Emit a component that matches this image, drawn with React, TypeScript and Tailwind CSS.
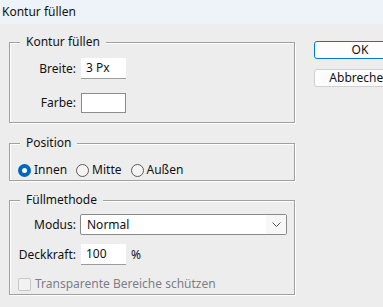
import React from "react";

function Group({ title, className, children }: { title: string; className: string; children: React.ReactNode }) {
  return (
    <div
      className={`relative border border-[#a0a0a0] shadow-[1px_1px_0_#ffffff,inset_1px_1px_0_#ffffff] ${className}`}
    >
      <span className="absolute left-[10px] top-[-9px] bg-[#ededed] px-[6px] leading-[16px]">{title}</span>
      {children}
    </div>
  );
}

function Radio({ label, checked }: { label: string; checked?: boolean }) {
  return (
    <div className="flex items-center gap-[3px]">
      {checked ? (
        <span className="flex h-[13px] w-[13px] items-center justify-center rounded-full bg-[#0067c0]">
          <span className="h-[5px] w-[5px] rounded-full bg-white" />
        </span>
      ) : (
        <span className="h-[13px] w-[13px] rounded-full border border-[#5c5c5c] bg-[#f4f4f4]" />
      )}
      <span>{label}</span>
    </div>
  );
}

export default function App() {
  return (
    <div
      className="h-[307px] w-[383px] overflow-hidden bg-[#ededed] text-[12px] text-[#111]"
      style={{ fontFamily: '"Noto Sans", "Liberation Sans", sans-serif' }}
    >
      <div className="flex h-[24px] items-center bg-[#eef2f9] pl-[2px]">Kontur füllen</div>

      <div className="flex pt-[18px]">
        <div className="ml-[9px] flex w-[286px] shrink-0 flex-col">
          <Group title="Kontur füllen" className="h-[81px] pt-[15px]">
            <div className="grid grid-cols-[66px_45px] items-center gap-x-[5px] gap-y-[14px]">
              <span className="text-right">Breite:</span>
              <div className="flex h-[21px] items-center border-b border-[#9c9c9c] bg-white pl-[5px]">3 Px</div>
              <span className="text-right">Farbe:</span>
              <div className="h-[20px] border border-[#8c8c8c] bg-white" />
            </div>
          </Group>

          <Group title="Position" className="mt-[20px] h-[38px] pl-[8px] pt-[17px]">
            <div className="flex items-center gap-[9px]">
              <Radio label="Innen" checked />
              <Radio label="Mitte" />
              <Radio label="Außen" />
            </div>
          </Group>

          <Group title="Füllmethode" className="mt-[19px] h-[95px] pt-[13px]">
            <div className="grid grid-cols-[66px_auto] items-center gap-x-[4px] gap-y-[9px] pr-[7px]">
              <span className="text-right">Modus:</span>
              <div className="flex h-[21px] items-center justify-between rounded-[2px] border border-[#8a8a8a] bg-white pl-[6px]">
                <span>Normal</span>
                <span className="flex h-full w-[20px] items-center justify-center bg-[#f7f7f7]">
                  <svg width="9" height="6" viewBox="0 0 9 6" fill="none" stroke="#555" strokeWidth="1">
                    <path d="M0.5 0.5 L4.5 4.5 L8.5 0.5" />
                  </svg>
                </span>
              </div>
              <span className="text-right">Deckkraft:</span>
              <div className="flex items-center gap-[5px]">
                <div className="ml-[1px] flex h-[21px] w-[45px] items-center border-b border-[#9c9c9c] bg-white pl-[5px]">100</div>
                <span>%</span>
              </div>
            </div>
            <div className="mt-[10px] flex items-center gap-[4px] pl-[8px] text-[#7d7d88]">
              <span className="h-[13px] w-[13px] rounded-[2px] border border-[#c8c8c8] bg-[#f2f2f2]" />
              <span>Transparente Bereiche schützen</span>
            </div>
          </Group>
        </div>

        <div className="ml-[19px] flex shrink-0 flex-col gap-[10px]">
          <button className="-mt-px h-[18px] w-[92px] rounded-[3px] border border-[#0078d4] bg-[#fdfdfd] leading-none">
            OK
          </button>
          <button className="h-[18px] w-[92px] rounded-[3px] border border-[#d0d0d0] bg-[#fdfdfd] leading-none">
            Abbrechen
          </button>
        </div>
      </div>
    </div>
  );
}
